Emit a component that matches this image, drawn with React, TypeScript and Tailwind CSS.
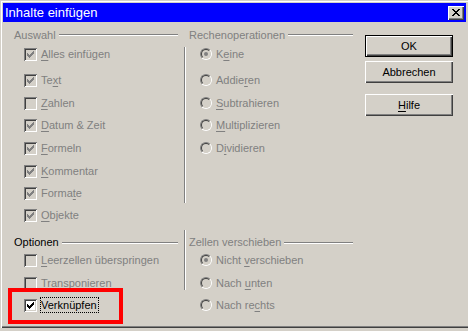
import React from "react";

const CHECK =
  "M9 3h1v1h-1z M8 4h2v1h-2z M3 5h1v1h-1z M7 5h3v1h-3z M3 6h2v1h-2z M6 6h3v1h-3z M3 7h5v1h-5z M4 8h3v1h-3z M5 9h1v1h-1z";

const CLOSE_X =
  "M0 0h2v1h-2z M6 0h2v1h-2z M1 1h2v1h-2z M5 1h2v1h-2z M2 2h4v1h-4z M3 3h2v1h-2z M2 4h4v1h-4z M1 5h2v1h-2z M5 5h2v1h-2z M0 6h2v1h-2z M6 6h2v1h-2z";

function Checkbox({ checked, disabled }: { checked: boolean; disabled: boolean }) {
  return (
    <span
      className={`relative block w-[13px] h-[13px] shrink-0 shadow-[inset_1px_1px_#808080,inset_-1px_-1px_#ffffff,inset_2px_2px_#404040,inset_-2px_-2px_#d4d0c8] ${
        disabled ? "bg-[#d4d0c8]" : "bg-white"
      }`}
    >
      {checked && (
        <svg className="absolute left-0 top-0" width="13" height="13" viewBox="0 0 13 13" shapeRendering="crispEdges">
          <path d={CHECK} fill={disabled ? "#808080" : "#000000"} />
        </svg>
      )}
    </span>
  );
}

function Radio({ checked }: { checked: boolean }) {
  return (
    <span className="relative block w-[12px] h-[12px] shrink-0 rounded-full border border-t-[#808080] border-l-[#808080] border-r-white border-b-white">
      <span className="absolute inset-0 rounded-full border border-t-[#404040] border-l-[#404040] border-r-[#d4d0c8] border-b-[#d4d0c8] bg-[#d4d0c8]" />
      {checked && <span className="absolute left-[3px] top-[3px] w-[4px] h-[4px] rounded-full bg-[#808080]" />}
    </span>
  );
}

function Label({ text, u }: { text: string; u: number }) {
  if (u < 0) return <span>{text}</span>;
  return (
    <span>
      {text.slice(0, u)}
      <span className="underline decoration-1 underline-offset-[2px]">{text[u]}</span>
      {text.slice(u + 1)}
    </span>
  );
}

function Header({ text, dark, h, pl, pr }: { text: string; dark?: boolean; h: string; pl: string; pr: string }) {
  return (
    <div className={`flex items-center ${h} ${pl} ${pr}`}>
      <span className={dark ? "text-black" : "text-[#808080]"}>{text}</span>
      <div className="flex-1 ml-[3px] h-[2px] border-t border-t-[#808080] border-b border-b-white" />
    </div>
  );
}

type Item = { text: string; u: number; h: string; checked: boolean };

const auswahl: Item[] = [
  { text: "Alles einfügen", u: 0, h: "h-[26px]", checked: true },
  { text: "Text", u: 2, h: "h-[23px]", checked: true },
  { text: "Zahlen", u: 0, h: "h-[22px]", checked: false },
  { text: "Datum & Zeit", u: 0, h: "h-[23px]", checked: true },
  { text: "Formeln", u: 0, h: "h-[23px]", checked: true },
  { text: "Kommentar", u: 0, h: "h-[22px]", checked: true },
  { text: "Formate", u: 5, h: "h-[22px]", checked: true },
  { text: "Objekte", u: 0, h: "h-[22px]", checked: true },
];

const rechen: Item[] = [
  { text: "Keine", u: 1, h: "h-[26px]", checked: true },
  { text: "Addieren", u: 5, h: "h-[23px]", checked: false },
  { text: "Subtrahieren", u: 0, h: "h-[22px]", checked: false },
  { text: "Multiplizieren", u: 0, h: "h-[23px]", checked: false },
  { text: "Dividieren", u: 1, h: "h-[23px]", checked: false },
];

const zellen: Item[] = [
  { text: "Nicht verschieben", u: 6, h: "h-[23px]", checked: true },
  { text: "Nach unten", u: 5, h: "h-[22px]", checked: false },
  { text: "Nach rechts", u: 7, h: "h-[22px]", checked: false },
];

function Button({ text, u, isDefault }: { text: string; u: number; isDefault?: boolean }) {
  return (
    <div
      className={`w-[88px] h-[22px] flex items-center justify-center bg-[#d4d0c8] text-black ${
        isDefault
          ? "border border-black shadow-[inset_1px_1px_#ffffff,inset_-1px_-1px_#404040,inset_-2px_-2px_#808080]"
          : "shadow-[inset_1px_1px_#ffffff,inset_-1px_-1px_#404040,inset_-2px_-2px_#808080]"
      }`}
    >
      <Label text={text} u={u} />
    </div>
  );
}

export default function App() {
  return (
    <div className="relative w-[468px] h-[331px] bg-[#d4d0c8] overflow-hidden [font-family:'Liberation_Sans',Arial,sans-serif] text-[11px] leading-none select-none">
      <div className="w-[468px] h-[328px] flex flex-col pt-[3px] pl-[3px] pr-[2px] shadow-[inset_1px_1px_#d4d0c8,inset_2px_2px_#ffffff,inset_0_-1px_#404040,inset_0_-2px_#808080]">
        {/* Title bar */}
        <div className="h-[19px] bg-[#0000ff] flex items-center pl-[2px] pr-[2px]">
          <span className="flex-1 text-white text-[13px]">Inhalte einfügen</span>
          <div className="relative w-[16px] h-[14px] bg-[#d4d0c8] shadow-[inset_1px_1px_#ffffff,inset_-1px_-1px_#404040,inset_-2px_-2px_#808080]">
            <svg className="absolute left-[4px] top-[3px]" width="8" height="7" viewBox="0 0 8 7" shapeRendering="crispEdges">
              <path d={CLOSE_X} fill="#000" />
            </svg>
          </div>
        </div>

        {/* Body */}
        <div className="flex pt-[6px] pl-[5px]">
          <div className="flex flex-col w-[349px]">
            {/* Top section */}
            <div className="flex">
              <div className="w-[176px] flex flex-col">
                <Header text="Auswahl" h="h-[14px]" pl="pl-[6px]" pr="pr-[6px]" />
                <div className="mt-[1px] flex flex-col pl-[16px]">
                  {auswahl.map((it) => (
                    <div key={it.text} className={`${it.h} flex items-start`}>
                      <div className="h-[22px] flex items-center gap-[4px] text-[#808080]">
                        <Checkbox checked={it.checked} disabled />
                        <Label text={it.text} u={it.u} />
                      </div>
                    </div>
                  ))}
                </div>
              </div>
              <div className="mt-[19px] h-[156px] w-[2px] border-l border-l-[#808080] border-r border-r-white" />
              <div className="w-[171px] flex flex-col">
                <Header text="Rechenoperationen" h="h-[14px]" pl="pl-[3px]" pr="pr-[4px]" />
                <div className="mt-[1px] flex flex-col pl-[14px]">
                  {rechen.map((it) => (
                    <div key={it.text} className={`${it.h} flex items-start`}>
                      <div className="h-[22px] flex items-center gap-[4px] text-[#808080]">
                        <Radio checked={it.checked} />
                        <Label text={it.text} u={it.u} />
                      </div>
                    </div>
                  ))}
                </div>
              </div>
            </div>

            {/* Bottom section */}
            <div className="flex mt-[4px]">
              <div className="w-[176px] flex flex-col">
                <div className="mt-[6px]">
                  <Header text="Optionen" dark h="h-[13px]" pl="pl-[6px]" pr="pr-[6px]" />
                </div>
                <div className="flex flex-col pl-[16px]">
                  <div className="h-[23px] flex items-start">
                    <div className="h-[22px] flex items-center gap-[4px] text-[#808080]">
                      <Checkbox checked={false} disabled />
                      <Label text="Leerzellen überspringen" u={0} />
                    </div>
                  </div>
                  <div className="h-[22px] flex items-start">
                    <div className="h-[22px] flex items-center gap-[4px] text-[#808080]">
                      <Checkbox checked={false} disabled />
                      <Label text="Transponieren" u={-1} />
                    </div>
                  </div>
                  <div className="h-[22px] flex items-start">
                    <div className="h-[22px] flex items-center gap-[3px] text-black">
                      <Checkbox checked disabled={false} />
                      <span className="h-[16px] flex items-center border border-dotted border-black pr-[1px]">
                        Verknüpfen
                      </span>
                    </div>
                  </div>
                </div>
              </div>
              <div className="h-[60px] w-[2px] border-l border-l-[#808080] border-r border-r-white" />
              <div className="w-[171px] flex flex-col">
                <div className="mt-[6px]">
                  <Header text="Zellen verschieben" h="h-[13px]" pl="pl-[3px]" pr="pr-[4px]" />
                </div>
                <div className="flex flex-col pl-[14px]">
                  {zellen.map((it) => (
                    <div key={it.text} className={`${it.h} flex items-start`}>
                      <div className="h-[22px] flex items-center gap-[4px] text-[#808080]">
                        <Radio checked={it.checked} />
                        <Label text={it.text} u={it.u} />
                      </div>
                    </div>
                  ))}
                </div>
              </div>
            </div>
          </div>

          {/* Buttons */}
          <div className="ml-[8px] mt-[7px] flex flex-col">
            <Button text="OK" u={-1} isDefault />
            <div className="mt-[4px]">
              <Button text="Abbrechen" u={-1} />
            </div>
            <div className="mt-[11px]">
              <Button text="Hilfe" u={0} />
            </div>
          </div>
        </div>
      </div>

      {/* Red highlight */}
      <div className="absolute left-[8px] top-[288px] w-[115px] h-[36px] border-[4px] border-[#ff0000] pointer-events-none" />
    </div>
  );
}
